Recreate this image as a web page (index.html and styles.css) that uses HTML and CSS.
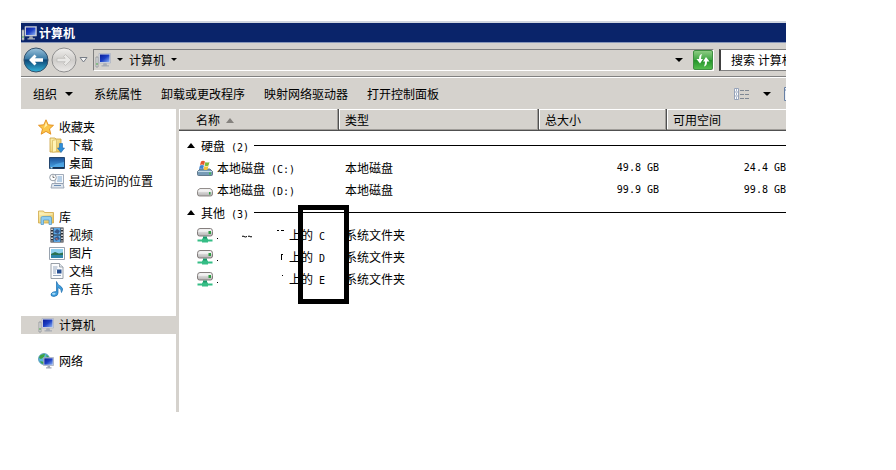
FILE: index.html
```html
<!DOCTYPE html>
<html lang="zh-CN">
<head>
    <meta charset="UTF-8">
    <meta name="viewport" content="width=device-width, initial-scale=1.0">
    <title>计算机</title>
    <link rel="stylesheet" href="styles.css">
</head>
<body>
    <!-- Shared icons -->
    <svg class="sprite" aria-hidden="true">
        <defs>
            <linearGradient id="screen" x1="0" y1="0" x2="1" y2="1">
                <stop offset="0" stop-color="#0a1d96"/>
                <stop offset="0.5" stop-color="#1c3fc4"/>
                <stop offset="1" stop-color="#8fb4f4"/>
            </linearGradient>
            <linearGradient id="backFill" x1="0" y1="0" x2="0" y2="1">
                <stop offset="0" stop-color="#9cc3dc"/>
                <stop offset="0.45" stop-color="#3a7ba6"/>
                <stop offset="0.5" stop-color="#0d4675"/>
                <stop offset="1" stop-color="#35b5dc"/>
            </linearGradient>
            <linearGradient id="forwardFill" x1="0" y1="0" x2="0" y2="1">
                <stop offset="0" stop-color="#f0efed"/>
                <stop offset="0.5" stop-color="#cfcdca"/>
                <stop offset="1" stop-color="#eceae8"/>
            </linearGradient>
            <linearGradient id="metal" x1="0" y1="0" x2="0" y2="1">
                <stop offset="0" stop-color="#fafafa"/>
                <stop offset="1" stop-color="#b4b2b2"/>
            </linearGradient>
            <linearGradient id="folder" x1="0" y1="0" x2="1" y2="1">
                <stop offset="0" stop-color="#fdf3b4"/>
                <stop offset="1" stop-color="#e3bd55"/>
            </linearGradient>
            <linearGradient id="blue" x1="0" y1="0" x2="0" y2="1">
                <stop offset="0" stop-color="#1b4f96"/>
                <stop offset="1" stop-color="#4aa8e8"/>
            </linearGradient>
        </defs>
        <symbol id="computer" viewBox="0 0 16 16">
            <path d="M1 5h2v10H1z" fill="#e8e8e8" stroke="#8b8f94" stroke-width=".8"/>
            <path d="M1.500 11h1v2h-1z" fill="#4fae4a"/>
            <path d="M4 1.500h11.500v9.500H4z" fill="#d8dde8" stroke="#a9b0c0" stroke-width=".7"/>
            <path d="M5 2.500h9.500v7.500H5z" fill="url(#screen)"/>
            <path d="M8.500 11.300h3l.5 2h2v1.200H6.500v-1.200h1.500z" fill="#a6abb5"/>
        </symbol>
        <symbol id="netdrive" viewBox="0 0 16 16">
            <path d="M3 1.500h10.500q2 0 2 3V7q0 2-2 2h-11q-2 0-2-2V4.500q0-3 2.500-3z" fill="url(#metal)" stroke="#77716f" stroke-width=".9"/>
            <path d="M1.500 4h13" stroke="#fff" stroke-width=".9"/>
            <path d="M11.500 4h2.500v3h-2.500z" fill="#2f9c43"/>
            <path d="M6 9.500h4v3H6z" fill="#1d9a6b"/>
            <path d="M.5 12.500h15v2H.5zM5 11.500h6v4H5z" fill="#35bd85"/>
        </symbol>
        <symbol id="down" viewBox="0 0 8 4">
            <path d="M0 0h8L4 4z"/>
        </symbol>
        <symbol id="up" viewBox="0 0 8 5">
            <path d="M4 0l4 5H0z"/>
        </symbol>
    </svg>

    <main class="window">
        <header class="titlebar">
            <svg class="icon"><use href="#computer"/></svg>
            <h1>计算机</h1>
        </header>

        <div class="navbar">
            <div class="history">
                <button type="button" aria-label="后退">
                    <svg width="26" height="26" viewBox="0 0 26 26">
                        <circle cx="13" cy="13" r="12" fill="url(#backFill)" stroke="#34516b"/>
                        <path d="M6 13l5.500-5.500 2 2-1.700 1.800H20v3.400h-8.200l1.700 1.800-2 2z" fill="#fff"/>
                    </svg>
                </button>
                <button type="button" aria-label="前进">
                    <svg width="26" height="26" viewBox="0 0 26 26">
                        <circle cx="13" cy="13" r="12" fill="url(#forwardFill)" stroke="#8f8f8f"/>
                        <path d="M20 13l-5.500-5.500-2 2 1.700 1.800H6v3.400h8.200l-1.700 1.800 2 2z" fill="#e9e8e6" stroke="#b9b7b4" stroke-width=".7"/>
                    </svg>
                </button>
                <button type="button" aria-label="最近的页面">
                    <svg width="9" height="6" viewBox="0 0 9 6"><path d="M1 .5h7L4.500 5z" fill="#f4f4f4" stroke="#777d86"/></svg>
                </button>
            </div>
            <div class="address">
                <svg class="icon"><use href="#computer"/></svg>
                <button type="button" class="crumb-arrow" aria-label="位置"><svg class="caret small"><use href="#down"/></svg></button>
                <button type="button" class="crumb">计算机</button>
                <button type="button" class="crumb-arrow" aria-label="展开"><svg class="caret small"><use href="#down"/></svg></button>
                <button type="button" class="address-drop" aria-label="以前的位置"><svg class="caret"><use href="#down"/></svg></button>
                <button type="button" class="refresh" aria-label="刷新">
                    <svg width="18" height="18" viewBox="0 0 18 18">
                        <path d="M8 3Q5 3.500 5 8H2.500L6 12.500 9 8H7Q7 5 8 3z" fill="#fff"/>
                        <path d="M10 15.500q3-.5 3-5h2.500L12 6 9 10.500h2q0 3-1 5z" fill="#fff"/>
                    </svg>
                </button>
            </div>
            <input class="search" type="text" aria-label="搜索 计算机" value="搜索 计算机">
        </div>

        <div class="toolbar">
            <button type="button" class="organize">组织 <svg class="caret"><use href="#down"/></svg></button>
            <button type="button">系统属性</button>
            <button type="button">卸载或更改程序</button>
            <button type="button">映射网络驱动器</button>
            <button type="button">打开控制面板</button>
            <div class="views">
                <button type="button" aria-label="更改视图">
                    <svg width="16" height="12" viewBox="0 0 16 12">
                        <path d="M.5.5h4v11h-4zM.5 4h4M.5 8h4" fill="#fff" stroke="#97a3b8"/>
                        <path d="M2 2h1M2 6h1M2 10h1" stroke="#4d6c9c"/>
                        <path d="M6 2.500h4M11 2.500h4M6 6.500h4M11 6.500h4M6 10.500h4M11 10.500h4" stroke="#7f8894"/>
                    </svg>
                </button>
                <button type="button" aria-label="更多选项"><svg class="caret"><use href="#down"/></svg></button>
                <button type="button" class="preview" aria-label="预览窗格">
                    <svg width="16" height="14" viewBox="0 0 16 14"><path d="M.5.5h15v13H.5zM.5 3h15" fill="#eef2f8" stroke="#6880a4"/></svg>
                </button>
            </div>
        </div>

        <div class="content">
            <nav class="sidebar">
                <ul>
                    <li><a href="#">
                        <svg class="icon" viewBox="0 0 16 16"><path d="M8 .8l2.200 5 5.300.5-4 3.600 1.300 5.300L8 12.400l-4.800 2.800 1.300-5.300-4-3.600 5.300-.5z" fill="#fbc64a" stroke="#e28c1c" stroke-width=".9"/><path d="M8 3l1.300 3.600L6 9z" fill="#fff0b0"/></svg>
                        收藏夹</a></li>
                    <li class="child"><a href="#">
                        <svg class="icon" viewBox="0 0 16 16"><path d="M1 1h5l1 1h5v13H1z" fill="url(#folder)" stroke="#c9a03d" stroke-width=".8"/><path d="M3.500 3.500l4-1v12l-4 .8z" fill="#fff3b5" stroke="#d2ae50" stroke-width=".6"/><path d="M10.500 6.500h3V11h2L12 15.500 8.500 11h2z" fill="#2f8fd8" stroke="#1c68b0" stroke-width=".6"/></svg>
                        下载</a></li>
                    <li class="child"><a href="#">
                        <svg class="icon" viewBox="0 0 16 16"><path d="M.5 2.500h15v11H.5z" fill="url(#blue)" stroke="#24466f"/><path d="M1 13L7 9l8-2v5.500z" fill="#5ab4ef" opacity=".6"/><path d="M1 12h14v1.500H1z" fill="#17304e"/><path d="M1.500 12h2v1.500h-2z" fill="#a8dcf4"/></svg>
                        桌面</a></li>
                    <li class="child"><a href="#">
                        <svg class="icon" viewBox="0 0 16 16"><path d="M6 1.500h8.500v9H6z" fill="#f6f8fb" stroke="#8b97a8" stroke-width=".8"/><path d="M8.500 4h4.500M8.500 6h4.500M8 8h5" stroke="#78a5cf"/><path d="M3 10.500h11l1 4.500H2z" fill="#dfe6ee" stroke="#8b97a8" stroke-width=".8"/><path d="M5 12.500h7" stroke="#6b8eb5"/><circle cx="4" cy="4.500" r="3.300" fill="#fff" stroke="#8a949f" stroke-width=".9"/><path d="M4 2.500v2h1.500" fill="none" stroke="#555" stroke-width=".8"/></svg>
                        最近访问的位置</a></li>
                </ul>
                <ul>
                    <li><a href="#">
                        <svg class="icon" viewBox="0 0 16 16"><path d="M.5 2h5l1 1.500h9V14H.5z" fill="url(#folder)" stroke="#cfa748" stroke-width=".8"/><path d="M1.500 5h13" stroke="#fff6c8"/><path d="M3 15.500V9q0-1.500 1.500-1.500h7.500q1.500 0 1.500 1.500v6.500h-2.500V11H5.500v4.500z" fill="#8fcdf0" stroke="#4d96c8" stroke-width=".7"/></svg>
                        库</a></li>
                    <li class="child"><a href="#">
                        <svg class="icon" viewBox="0 0 16 16"><path d="M1.500.5h13v15h-13z" fill="#2b2f36"/><path d="M4.500 1h7v6.500h-7zM4.500 8.500h7V15h-7z" fill="#5aa5e2"/><path d="M5 5l3-3 3 2-2 3zM5 11l4-2 2 3-4 2z" fill="#35598b"/><path d="M6 12l2-1 1 2z" fill="#cc7462"/><path d="M3 1.500v13M13 1.500v13" stroke="#fff" stroke-width="1.500" stroke-dasharray="1.500 1.500"/></svg>
                        视频</a></li>
                    <li class="child"><a href="#">
                        <svg class="icon" viewBox="0 0 16 16"><path d="M.5 2.500h15v12H.5z" fill="#fff" stroke="#8c98a6" stroke-width=".9"/><path d="M2 4h12v9H2z" fill="#8fd0ee"/><path d="M2 9l4-2 4 1.500 4-1V10H2z" fill="#2c7352"/><path d="M2 10h12v3H2z" fill="#2f86a9"/></svg>
                        图片</a></li>
                    <li class="child"><a href="#">
                        <svg class="icon" viewBox="0 0 16 16"><path d="M2 .5h8.500L14 4v11.500H2z" fill="#fbfcfd" stroke="#8d959e" stroke-width=".9"/><path d="M10.500.5V4H14" fill="#dfe5eb" stroke="#8d959e" stroke-width=".8"/><path d="M4 4h4.500M4 6h4M4 8h3M4 10h3M4 12.500h8" stroke="#8a9eb7" stroke-width=".9"/><path d="M8 6.500h4.500v4H8z" fill="#244e91"/></svg>
                        文档</a></li>
                    <li class="child"><a href="#">
                        <svg class="icon" viewBox="0 0 16 16"><path d="M7.500.5Q8.500 4 12 5.500q3 2 .5 6 .2-4-3.500-5V12q0 3-4 3.500-3.500 0-3-2.500.8-2.500 5.500-2.500z" fill="#3d9ddc" stroke="#1b6cae" stroke-width=".7"/><ellipse cx="4.800" cy="12.800" rx="1.800" ry="1" fill="#a9dcf8"/></svg>
                        音乐</a></li>
                </ul>
                <ul>
                    <li class="selected"><a href="#" aria-current="page">
                        <svg class="icon"><use href="#computer"/></svg>
                        计算机</a></li>
                </ul>
                <ul>
                    <li><a href="#">
                        <svg class="icon" viewBox="0 0 16 16"><circle cx="6" cy="6" r="5.500" fill="#5bb5dd" stroke="#2b7a98" stroke-width=".6"/><path d="M2 2.500q3-2 5-1.500L6 4 3 6 1 5zM2 8l4 1v2.500Q3 11 2 8zM8 2l3 2-2 1z" fill="#3fa33f"/><path d="M5.500 4.500h10v8h-10z" fill="#d8dde8" stroke="#9099ac" stroke-width=".6"/><path d="M6.300 5.300h8.400v6.400H6.300z" fill="url(#screen)"/><path d="M9.500 12.700h2.500v1.500h1.500v1.300H8v-1.300h1.500z" fill="#a3a9b5"/></svg>
                        网络</a></li>
                </ul>
            </nav>

            <section class="files">
                <table>
                    <colgroup>
                        <col class="col-name">
                        <col class="col-type">
                        <col class="col-size">
                        <col>
                    </colgroup>
                    <thead>
                        <tr>
                            <th>名称 <svg class="sort"><use href="#up"/></svg></th>
                            <th>类型</th>
                            <th>总大小</th>
                            <th>可用空间</th>
                        </tr>
                    </thead>
                    <tbody>
                        <tr class="group first">
                            <th colspan="4"><div><svg class="expand"><use href="#up"/></svg><span>硬盘<span class="latin"> (2)</span></span></div></th>
                        </tr>
                        <tr>
                            <td><div class="name">
                                <svg class="icon" viewBox="0 0 16 16"><path d="M3 9h10l2.500 2.500v3q0 1-1 1h-13q-1 0-1-1v-3z" fill="#779bb6" stroke="#4d6579" stroke-width=".8"/><path d="M1 11.500h14" stroke="#c4dbe9"/><path d="M12 12.500h2v2h-2z" fill="#45bd55"/><path d="M4 1.500q2-1.500 4 0L7 5Q5 4 3 5z" fill="#e5572e"/><path d="M8.500 2q2 1.200 4 0l-1 3.500q-2 1-4 0z" fill="#7cbb3c"/><path d="M3 5.500q2-1 4 0L6 9Q4 8 2 9z" fill="#3d83d0"/><path d="M7.500 6q2 1 4 0l-1 3.500q-2 1-4 0z" fill="#f5c237"/></svg>
                                <span>本地磁盘<span class="latin"> (C:)</span></span>
                            </div></td>
                            <td>本地磁盘</td>
                            <td class="number">49.8 GB</td>
                            <td class="number">24.4 GB</td>
                        </tr>
                        <tr>
                            <td><div class="name">
                                <svg class="icon" viewBox="0 0 16 16"><path d="M3 6.500h10q2.500 1 2.500 3v2.500q0 2-2 2h-11q-2 0-2-2V9.500q0-2 2.500-3z" fill="url(#metal)" stroke="#77716f" stroke-width=".8"/><path d="M1.500 9h13" stroke="#fff"/><path d="M12 10h1.500v2.500H12z" fill="#2f9c43"/></svg>
                                <span>本地磁盘<span class="latin"> (D:)</span></span>
                            </div></td>
                            <td>本地磁盘</td>
                            <td class="number">99.9 GB</td>
                            <td class="number">99.8 GB</td>
                        </tr>
                        <tr class="group">
                            <th colspan="4"><div><svg class="expand"><use href="#up"/></svg><span>其他<span class="latin"> (3)</span></span></div></th>
                        </tr>
                        <tr>
                            <td><div class="name">
                                <svg class="icon"><use href="#netdrive"/></svg>
                                <svg class="erased" viewBox="0 0 72 16"><path d="M0 11.500h1M60 3.500h2M64 3.500h3" stroke="#000"/><path d="M25 9.500q1-1 2 0t3 0M31 9.500q1-1 2 0t2 0" fill="none" stroke="#000"/></svg>
                                <span>上的<span class="latin"> C</span></span>
                            </div></td>
                            <td>系统文件夹</td>
                            <td></td>
                            <td></td>
                        </tr>
                        <tr>
                            <td><div class="name">
                                <svg class="icon"><use href="#netdrive"/></svg>
                                <svg class="erased" viewBox="0 0 72 16"><path d="M0 11.500h1M64.500 11V5M64 5.500h2" stroke="#000"/></svg>
                                <span>上的<span class="latin"> D</span></span>
                            </div></td>
                            <td>系统文件夹</td>
                            <td></td>
                            <td></td>
                        </tr>
                        <tr>
                            <td><div class="name">
                                <svg class="icon"><use href="#netdrive"/></svg>
                                <svg class="erased" viewBox="0 0 72 16"><path d="M0 11.500h1M65 4.500h1" stroke="#000"/></svg>
                                <span>上的<span class="latin"> E</span></span>
                            </div></td>
                            <td>系统文件夹</td>
                            <td></td>
                            <td></td>
                        </tr>
                    </tbody>
                </table>
                <div class="marker"></div>
            </section>
        </div>
    </main>
</body>
</html>
```
FILE: styles.css
```css
* {
    margin: 0;
    padding: 0;
    box-sizing: border-box;
}
body {
    background-color: #fff;
    color: #000;
    font-family: "Noto Sans CJK SC", sans-serif;
    font-size: 12px;
    line-height: 18px;
    min-height: 100vh;
    display: flex;
    padding: 21px 110px 58px 21px;
}
button, input {
    font: inherit;
    color: inherit;
    border: none;
    background: none;
}
button {
    display: flex;
    align-items: center;
    flex-shrink: 0;
    white-space: nowrap;
    cursor: pointer;
}
svg {
    display: block;
    flex-shrink: 0;
}
.sprite {
    position: absolute;
    width: 0;
    height: 0;
}
.icon {
    width: 16px;
    height: 16px;
}
.caret {
    width: 8px;
    height: 4px;
}
.caret.small {
    width: 6px;
    height: 3px;
}
.window {
    flex: 1;
    min-width: 0;
    display: flex;
    flex-direction: column;
    overflow: hidden;
}

/* Title bar */
.titlebar {
    display: flex;
    align-items: center;
    gap: 2px;
    height: 22px;
    background-color: #0a246a;
    color: #fff;
    border-top: 2px solid #d0d6e0;
    border-bottom: 1px solid #8796b8;
}
h1 {
    font-size: 12px;
    font-weight: bold;
}

/* Address bar */
.navbar {
    display: flex;
    align-items: center;
    height: 34px;
    padding-left: 2px;
    background-color: #d5d2cd;
    border-bottom: 1px solid #808080;
}
.history {
    display: flex;
    align-items: center;
    gap: 2px;
    margin-right: 5px;
}
.address {
    flex: 1;
    display: flex;
    align-items: center;
    height: 22px;
    padding-left: 1px;
    border: 1px solid;
    border-color: #808080 #fff #fff #808080;
}
.crumb-arrow {
    padding: 0 6px;
}
.address-drop {
    margin-left: auto;
    padding: 6px 10px;
}
.refresh {
    background: linear-gradient(#8ccb82, #3da542 50%, #219128 50%, #54bd4d);
    border: 1px solid #3f8f42;
    border-radius: 2px;
}
.search {
    width: 67px;
    height: 22px;
    margin-left: 5px;
    padding-left: 10px;
    background-color: #fff;
    border: 1px solid #808080;
    border-left: 2px solid #404040;
    border-right: none;
}

/* Toolbar */
.toolbar {
    display: flex;
    align-items: center;
    gap: 19px;
    height: 32px;
    padding-left: 12px;
    background-color: #d5d2cd;
    border-top: 1px solid #fff;
    overflow: hidden;
}
.organize {
    gap: 8px;
    padding-right: 2px;
}
.views {
    display: flex;
    gap: 13px;
    margin-left: auto;
    margin-right: -14px;
}

/* Sidebar */
.content {
    flex: 1;
    display: flex;
}
.sidebar {
    width: 158px;
    flex-shrink: 0;
    padding-top: 9px;
    border-right: 3px solid #d5d2cd;
}
.sidebar ul {
    list-style: none;
    margin-bottom: 18px;
}
.sidebar a {
    display: flex;
    align-items: center;
    gap: 5px;
    height: 18px;
    padding-left: 17px;
    color: inherit;
    text-decoration: none;
}
.sidebar .child a {
    gap: 4px;
    padding-left: 28px;
}
.selected {
    background-color: #d5d2cd;
}

/* File list */
.files {
    position: relative;
    flex: 1;
    min-width: 0;
}
table {
    width: 100%;
    table-layout: fixed;
    border-collapse: collapse;
    text-align: left;
}
.col-name {
    width: 160px;
}
.col-type {
    width: 200px;
}
.col-size {
    width: 128px;
}
th {
    font-weight: normal;
}
thead th {
    height: 22px;
    padding-left: 6px;
    background-color: #d5d2cd;
    box-shadow: inset -1px -1px #505050, inset -2px -2px #a09d99, inset 1px 1px #fff;
}
thead th:first-child {
    padding-left: 17px;
}
thead th:last-child {
    box-shadow: inset 0 -1px #505050, inset 0 -2px #a09d99, inset 1px 1px #fff;
}
.sort {
    display: inline-block;
    width: 8px;
    height: 5px;
    margin-left: 3px;
    vertical-align: 2px;
    fill: #85827e;
}
td {
    height: 22px;
    padding-left: 6px;
    white-space: nowrap;
}
.name {
    display: flex;
    align-items: center;
    gap: 4px;
    padding-left: 12px;
}
.erased {
    width: 72px;
    height: 16px;
    margin-right: -4px;
}
.group th {
    height: 23px;
}
.group.first th {
    height: 26px;
    padding-top: 3px;
}
.group div {
    display: flex;
    align-items: center;
    padding-left: 8px;
}
.group div::after {
    content: "";
    flex: 1;
    height: 1px;
    margin-left: 5px;
    background-color: #000;
}
.expand {
    width: 8px;
    height: 5px;
    margin-right: 6px;
}
.latin, .number {
    font-family: "DejaVu Sans Mono", monospace;
    font-size: 10px;
}
.latin {
    line-height: 1;
    white-space: pre;
}
.number {
    padding-right: 8px;
    text-align: right;
}
.number:last-child {
    padding-right: 0;
}
/* Black frame over the drive letters */
.marker {
    position: absolute;
    left: 119px;
    top: 96px;
    width: 51px;
    height: 99px;
    border: 5px solid #000;
}
```
